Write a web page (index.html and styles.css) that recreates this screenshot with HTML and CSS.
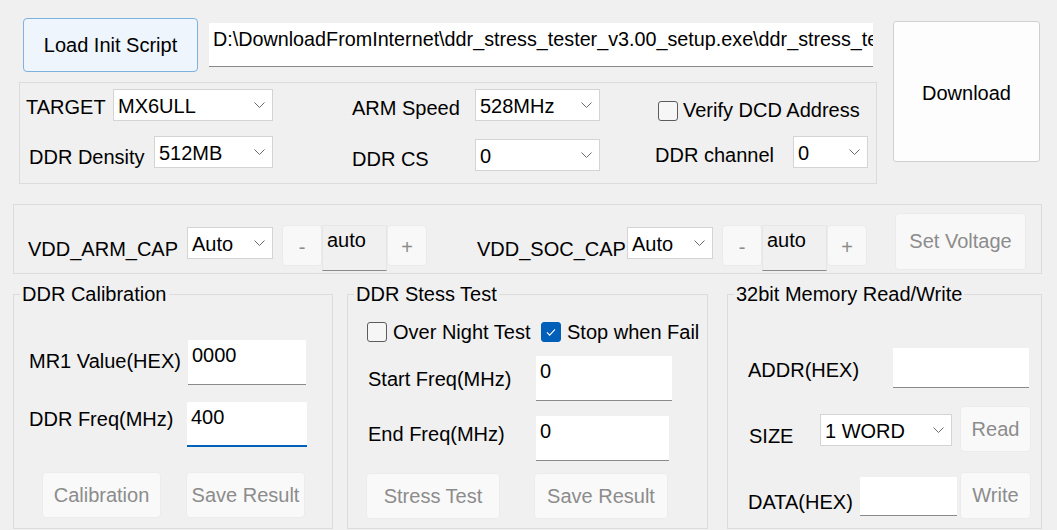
FILE: index.html
```html
<!DOCTYPE html>
<html lang="en">
  <head>
    <meta charset="UTF-8" />
    <meta name="viewport" content="width=device-width, initial-scale=1.0" />
    <title>DDR Stress Tester</title>
    <link rel="stylesheet" href="styles.css">
  </head>
  <body>
    <div class="head">
      <div class="head-left">
        <div class="top-row">
          <button class="btn btn-load">Load Init Script</button>
          <div class="text path">D:\DownloadFromInternet\ddr_stress_tester_v3.00_setup.exe\ddr_stress_tester_v3.00_setup\script\MX6ULL_14x14_DDR3_init.inc</div>
        </div>
        <div class="panel settings">
          <div class="col col-a">
            <div class="line">
              <span class="lbl mt7">TARGET</span>
              <div class="combo w160"><span>MX6ULL</span><svg class="chev" viewBox="0 0 11 6"><path d="M0.5 0.5 L5.5 5.5 L10.5 0.5" /></svg></div>
            </div>
            <div class="line">
              <span class="lbl mt10 indent">DDR Density</span>
              <div class="combo w119"><span>512MB</span><svg class="chev" viewBox="0 0 11 6"><path d="M0.5 0.5 L5.5 5.5 L10.5 0.5" /></svg></div>
            </div>
          </div>
          <div class="col col-b">
            <div class="line">
              <span class="lbl mt8">ARM Speed</span>
              <div class="combo w125"><span>528MHz</span><svg class="chev" viewBox="0 0 11 6"><path d="M0.5 0.5 L5.5 5.5 L10.5 0.5" /></svg></div>
            </div>
            <div class="line">
              <span class="lbl mt12">DDR CS</span>
              <div class="combo w125 mt3"><span>0</span><svg class="chev" viewBox="0 0 11 6"><path d="M0.5 0.5 L5.5 5.5 L10.5 0.5" /></svg></div>
            </div>
          </div>
          <div class="col col-c">
            <div class="line start">
              <span class="box mt12 ml3"></span>
              <span class="lbl mt10 ml5">Verify DCD Address</span>
            </div>
            <div class="line">
              <span class="lbl mt8">DDR channel</span>
              <div class="combo w75"><span>0</span><svg class="chev" viewBox="0 0 11 6"><path d="M0.5 0.5 L5.5 5.5 L10.5 0.5" /></svg></div>
            </div>
          </div>
        </div>
      </div>
      <button class="btn btn-download">Download</button>
    </div>

    <div class="panel vdd">
      <span class="lbl vdd-lbl">VDD_ARM_CAP</span>
      <div class="combo w86 vdd-combo arm"><span>Auto</span><svg class="chev" viewBox="0 0 11 6"><path d="M0.5 0.5 L5.5 5.5 L10.5 0.5" /></svg></div>
      <button class="btn step">-</button>
      <div class="text step-val">auto</div>
      <button class="btn step">+</button>
      <span class="lbl vdd-lbl soc">VDD_SOC_CAP</span>
      <div class="combo w86 vdd-combo"><span>Auto</span><svg class="chev" viewBox="0 0 11 6"><path d="M0.5 0.5 L5.5 5.5 L10.5 0.5" /></svg></div>
      <button class="btn step soc-step">-</button>
      <div class="text step-val">auto</div>
      <button class="btn step">+</button>
      <button class="btn btn-voltage">Set Voltage</button>
    </div>

    <div class="groups">
      <fieldset class="group cal">
        <legend>DDR Calibration</legend>
        <div class="line row-mr1">
          <span class="lbl lbl-mr1">MR1 Value(HEX)</span>
          <div class="text field w118">0000</div>
        </div>
        <div class="line row-freq">
          <span class="lbl lbl-freq">DDR Freq(MHz)</span>
          <div class="text field w120 focus">400</div>
        </div>
        <div class="line row-btns">
          <button class="btn act w119">Calibration</button>
          <button class="btn act w119 ml25">Save Result</button>
        </div>
      </fieldset>

      <fieldset class="group stress">
        <legend>DDR Stess Test</legend>
        <div class="line row-checks">
          <div class="check first"><span class="box"></span><span class="lbl">Over Night Test</span></div>
          <div class="check"><span class="box on"><svg viewBox="0 0 20 20"><path d="M5.5 10.5 L8.5 13.5 L14.5 7" /></svg></span><span class="lbl">Stop when Fail</span></div>
        </div>
        <div class="line row-start">
          <span class="lbl lbl-start">Start Freq(MHz)</span>
          <div class="text field w136">0</div>
        </div>
        <div class="line row-end">
          <span class="lbl lbl-end">End Freq(MHz)</span>
          <div class="text field w133">0</div>
        </div>
        <div class="line row-sbtns">
          <button class="btn act w134">Stress Test</button>
          <button class="btn act w134 ml34">Save Result</button>
        </div>
      </fieldset>

      <fieldset class="group mem">
        <legend>32bit Memory Read/Write</legend>
        <div class="line row-addr">
          <span class="lbl lbl-addr">ADDR(HEX)</span>
          <div class="text field w136 h40"></div>
        </div>
        <div class="line row-size">
          <span class="lbl lbl-size">SIZE</span>
          <div class="combo w132 mt8"><span>1 WORD</span><svg class="chev" viewBox="0 0 11 6"><path d="M0.5 0.5 L5.5 5.5 L10.5 0.5" /></svg></div>
          <button class="btn act rw">Read</button>
        </div>
        <div class="line row-data">
          <span class="lbl lbl-data">DATA(HEX)</span>
          <div class="text field w97 h39 mt5"></div>
          <button class="btn act rw ml3 h47">Write</button>
        </div>
      </fieldset>
    </div>
  </body>
</html>
```

FILE: styles.css
```css
:root {
  --page: #f0f0f0;
  --edge: #dcdcdc;
  --ink: #000;
  --muted: #8c8c8c;
}
html,
body {
  padding: 0;
  margin: 0;
}
body {
  background-color: var(--page);
  color: var(--ink);
  font-family: "Liberation Sans", Arial, sans-serif;
  font-size: 20px;
  width: 1057px;
  height: 530px;
  overflow: hidden;
}

/* shared bits */
.lbl {
  line-height: 22px;
  white-space: nowrap;
}
.line {
  display: flex;
  align-items: flex-start;
  justify-content: space-between;
}
.line.start {
  justify-content: flex-start;
}
.btn {
  font: inherit;
  color: var(--ink);
  padding: 0;
  margin: 0;
  border-radius: 4px;
  box-sizing: border-box;
}
.text {
  background-color: #fff;
  border-bottom: 1px solid #8a8a8a;
  box-sizing: border-box;
  padding: 4px 4px 0;
  line-height: 22px;
  white-space: nowrap;
  overflow: hidden;
}
.combo {
  height: 32px;
  box-sizing: border-box;
  background-color: #fff;
  border: 1px solid #d4d4d4;
  display: flex;
  align-items: center;
  justify-content: space-between;
  padding: 2px 7px 0 4px;
  line-height: 22px;
  white-space: nowrap;
}
.chev {
  width: 11px;
  height: 6px;
  margin-top: -2px;
  flex: none;
  fill: none;
  stroke: #6b6b6b;
  stroke-width: 1;
}
.box {
  width: 20px;
  height: 20px;
  box-sizing: border-box;
  border: 1px solid #5c5c5c;
  border-radius: 3px;
  background-color: #f6f6f6;
  display: block;
  flex: none;
  &.on {
    background-color: #005fb8;
    border-color: #005fb8;
  }
  svg {
    display: block;
    width: 18px;
    height: 18px;
    fill: none;
    stroke: #fff;
    stroke-width: 1.2;
  }
}
.panel {
  border: 1px solid var(--edge);
  box-sizing: border-box;
}

/* sizes used more than once */
.w75 { width: 75px; }
.w86 { width: 86px; }
.w97 { width: 97px; }
.w118 { width: 118px; }
.w119 { width: 119px; }
.w120 { width: 120px; }
.w125 { width: 125px; }
.w132 { width: 132px; }
.w133 { width: 133px; }
.w134 { width: 134px; }
.w136 { width: 136px; }
.w160 { width: 160px; }
.h39 { height: 39px !important; }
.h40 { height: 40px !important; }
.h47 { height: 47px !important; }
.mt3 { margin-top: 3px; }
.mt5 { margin-top: 5px; }
.mt7 { margin-top: 7px; }
.mt8 { margin-top: 8px; }
.mt10 { margin-top: 10px; }
.mt12 { margin-top: 12px; }
.ml3 { margin-left: 3px; }
.ml5 { margin-left: 5px; }
.ml25 { margin-left: 25px; }
.ml34 { margin-left: 34px; }

/* header: load button, path and first settings block */
.head {
  display: flex;
  align-items: flex-start;
  padding-top: 18px;
}
.head-left {
  margin-left: 19px;
  width: 858px;
}
.top-row {
  display: flex;
  align-items: flex-start;
  height: 54px;
}
.btn-load {
  margin-left: 4px;
  width: 175px;
  height: 54px;
  background-color: #eff5fc;
  border: 1px solid #7eb0e0;
}
.path {
  margin: 5px 0 0 11px;
  width: 664px;
  height: 44px;
  padding-top: 5px;
  font-size: 19.75px;
}
.btn-download {
  margin: 3px 0 0 16px;
  width: 147px;
  height: 141px;
  background-color: #fdfdfd;
  border: 1px solid #d0d0d0;
  border-radius: 3px;
  padding-top: 3px;
}

.settings {
  margin-top: 10px;
  height: 102px;
  display: flex;
  padding: 6px 0 0 6px;
}
.col {
  display: flex;
  flex-direction: column;
  gap: 15px;
}
.col-a { width: 247px; }
.col-b { width: 248px; margin-left: 79px; }
.col-c { width: 213px; margin-left: 55px; }
.indent { padding-left: 3px; }

/* voltage row */
.vdd {
  margin: 20px 0 0 13px;
  width: 1029px;
  height: 70px;
  display: flex;
  align-items: flex-start;
}
.vdd-lbl {
  margin: 33px 0 0 14px;
  width: 159px;
  &.soc {
    margin-left: 50px;
    width: 150px;
  }
}
.vdd-combo {
  margin-top: 22px;
}
.step {
  margin-top: 20px;
  width: 40px;
  height: 41px;
  background-color: #f8f8f8;
  border: 1px solid #ebebeb;
  color: var(--muted);
  padding-top: 3px;
  &.soc-step {
    margin-left: 9px;
  }
}
.arm + .step {
  margin-left: 9px;
}
.step-val {
  margin-top: 20px;
  width: 65px;
  height: 46px;
  background-color: var(--page);
  border: 1px solid #e6e6e6;
  border-bottom-color: #8a8a8a;
  padding-top: 3px;
}
.btn-voltage {
  margin: 8px 0 0 28px;
  width: 131px;
  height: 57px;
  background-color: #f8f8f8;
  border: 1px solid #ebebeb;
  color: var(--muted);
}

/* the three group boxes */
.groups {
  display: flex;
  align-items: flex-start;
  margin-top: 10px;
}
.group {
  margin: 0;
  padding: 0;
  border: 1px solid var(--edge);
  height: 245px;
  box-sizing: border-box;
  min-width: 0;
  legend {
    padding: 0 2px;
    margin-left: 6px;
    line-height: 20px;
  }
}
.cal { margin-left: 13px; width: 320px; }
.stress { margin-left: 14px; width: 361px; }
.mem { margin-left: 19px; width: 315px; }

.field {
  height: 45px;
}
.field.focus {
  border-bottom: 2px solid #005fb8;
}
.act {
  height: 46px;
  background-color: #f9f9f9;
  border: 1px solid #ececec;
  color: var(--muted);
}

.row-mr1 { margin-top: 36px; justify-content: flex-start; }
.lbl-mr1 { margin: 10px 0 0 15px; width: 159px; }
.row-freq { margin-top: 17px; justify-content: flex-start; }
.lbl-freq { margin: 6px 0 0 15px; width: 158px; }
.row-btns { margin: 25px 0 0 28px; justify-content: flex-start; }

.row-checks {
  margin: 18px 0 0 19px;
  justify-content: flex-start;
}
.check {
  display: flex;
  align-items: flex-start;
  gap: 6px;
  .lbl {
    margin-top: -1px;
  }
  &.first {
    width: 174px;
  }
}
.row-start { margin-top: 13px; justify-content: flex-start; }
.lbl-start { margin: 12px 0 0 20px; width: 168px; }
.row-end { margin-top: 15px; justify-content: flex-start; }
.lbl-end { margin: 7px 0 0 20px; width: 168px; }
.row-sbtns { margin: 12px 0 0 18px; justify-content: flex-start; }

.row-addr { margin-top: 44px; justify-content: flex-start; }
.lbl-addr { margin: 11px 0 0 20px; width: 145px; }
.row-size { margin-top: 18px; justify-content: flex-start; }
.lbl-size { margin: 19px 0 0 21px; width: 71px; }
.rw {
  width: 71px;
  margin-left: 8px;
}
.row-data { margin-top: 20px; justify-content: flex-start; }
.lbl-data { margin: 19px 0 0 20px; width: 112px; }
.row-data .rw { margin-left: 3px; }
```
